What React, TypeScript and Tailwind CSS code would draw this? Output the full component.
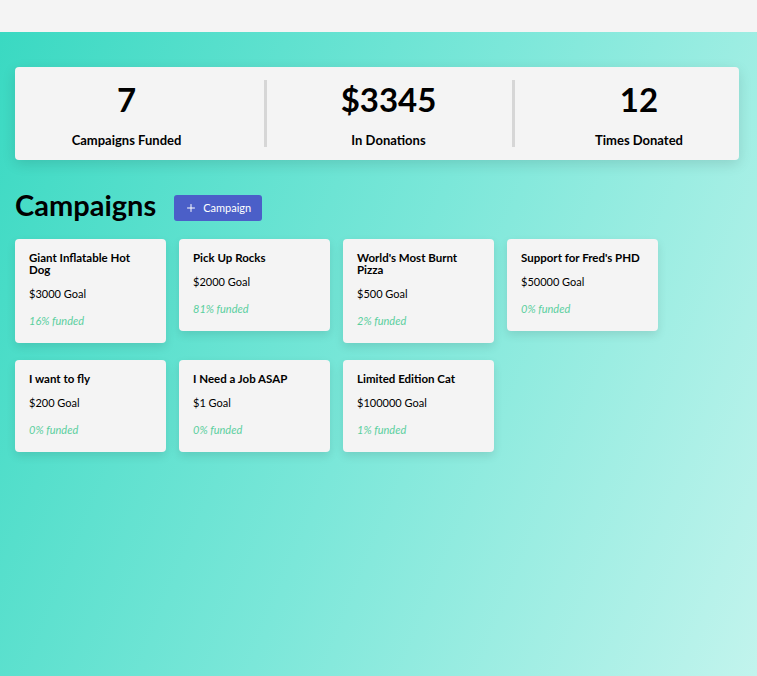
import { Plus } from "lucide-react";

type Campaign = {
  title: string;
  goal: number;
  funded: number;
};

const campaigns: Campaign[] = [
  { title: "Giant Inflatable Hot Dog", goal: 3000, funded: 16 },
  { title: "Pick Up Rocks", goal: 2000, funded: 81 },
  { title: "World's Most Burnt Pizza", goal: 500, funded: 2 },
  { title: "Support for Fred's PHD", goal: 50000, funded: 0 },
  { title: "I want to fly", goal: 200, funded: 0 },
  { title: "I Need a Job ASAP", goal: 1, funded: 0 },
  { title: "Limited Edition Cat", goal: 100000, funded: 1 },
];

function Stat({ value, label }: { value: string; label: string }) {
  return (
    <div className="flex flex-col items-center">
      <span className="text-[33px] font-bold leading-[38px]">{value}</span>
      <span className="mt-[14px] text-[13px] font-bold leading-[16px]">{label}</span>
    </div>
  );
}

function Divider() {
  return <div className="h-[67px] w-[3px] shrink-0 bg-[#d6d6d6]" />;
}

export default function App() {
  return (
    <div className="flex min-h-[676px] flex-col font-['Lato',sans-serif] text-black">
      <header className="h-8 bg-[#f4f4f4]" />

      <main className="flex-1 bg-[linear-gradient(112deg,#3ad9c2_0%,#7be7d9_50%,#c2f4ed_100%)] pl-[15px] pr-[18px] pt-[35px]">
        <section className="flex h-[93px] items-center rounded bg-[#f4f4f4] shadow-[0_4px_14px_rgba(0,0,0,0.12)]">
          <div className="flex w-[249px] justify-center pr-[26px]">
            <Stat value="7" label="Campaigns Funded" />
          </div>
          <Divider />
          <div className="flex w-[245px] justify-center pr-[2px]">
            <Stat value="$3345" label="In Donations" />
          </div>
          <Divider />
          <div className="flex flex-1 justify-center pl-[24px]">
            <Stat value="12" label="Times Donated" />
          </div>
        </section>

        <div className="mt-[27px] flex items-start gap-[18px]">
          <h1 className="text-[29px] font-bold leading-[36px]">Campaigns</h1>
          <button className="mt-[8px] flex h-[26px] items-center gap-[6px] rounded-[3px] bg-[#4b5fc8] px-[11px] text-[11px] text-white">
            <Plus size={12} strokeWidth={2} />
            Campaign
          </button>
        </div>

        <div className="mt-[16px] flex flex-wrap items-start gap-x-[13px] gap-y-[17px]">
          {campaigns.map((c) => (
            <div
              key={c.title}
              className="w-[151px] rounded bg-[#f4f4f4] px-[14px] pb-[15px] pt-[13px] shadow-[0_4px_10px_rgba(0,0,0,0.1)]"
            >
              <h2 className="text-[11.5px] font-bold leading-[12px]">{c.title}</h2>
              <p className="mt-[11px] text-[11px] leading-[14px]">${c.goal} Goal</p>
              <p className="mt-[13px] text-[11px] italic leading-[14px] text-[#5acf9e]">{c.funded}% funded</p>
            </div>
          ))}
        </div>
      </main>
    </div>
  );
}
